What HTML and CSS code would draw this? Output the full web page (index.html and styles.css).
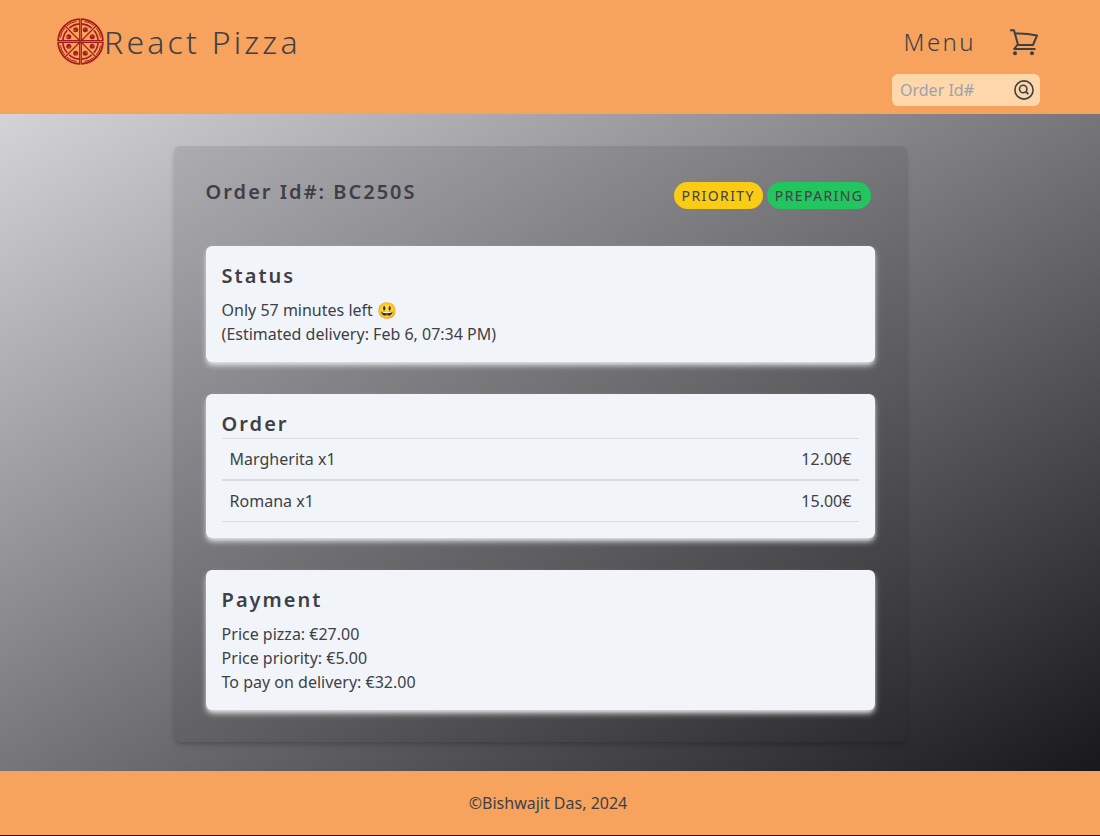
FILE: index.html
```html
<!DOCTYPE html>
<html lang="en">
<head>
<meta charset="utf-8">
<title>React Pizza</title>
<link rel="stylesheet" href="styles.css">
</head>
<body>
<header class="header">
  <div class="topbar">
    <a class="brand">
      <svg class="logo" viewBox="-24.500 -24.500 48 48" fill="none" stroke="#a51c1c">
        <defs>
          <g id="quarter">
            <path stroke-width="1.800" d="M.8 -22.400A22.400 22.400 0 0 1 22.400 -1.300"/>
            <path stroke-width="1.600" d="M1 -17.600Q7 -17.200 11.300 -13.300M13.300 -11.300Q17.200 -7 17.600 -1"/>
            <path stroke-width="1" d="M4 -20.100Q9.500 -19.400 13.500 -15.800M15.800 -13.500Q19.200 -9.500 20.100 -4"/>
            <path stroke-width="1.200" d="M.8 -23V0M23 -.8H0M0 0L15.500 -15.500"/>
            <circle cx="4.800" cy="-11.700" r="2.500" fill="#a51c1c" stroke="none"/>
            <circle cx="11.700" cy="-4.800" r="2.500" fill="#a51c1c" stroke="none"/>
            <path stroke="#f8a35d" stroke-width=".8" d="M3.800 -12.300L4.900 -12.900M10.700 -5.400L11.800 -6"/>
          </g>
        </defs>
        <use href="#quarter"/>
        <use href="#quarter" transform="rotate(90)"/>
        <use href="#quarter" transform="rotate(180)"/>
        <use href="#quarter" transform="rotate(270)"/>
      </svg>
      <span class="brand-name">React Pizza</span>
    </a>
    <nav class="nav">
      <a class="menu">Menu</a>
      <svg class="cart" viewBox="0 0 28 28" fill="none" stroke="currentColor" stroke-width="2" stroke-linejoin="round">
        <path d="M0 2.200H4L8.100 17M5 5.500Q16 5 27 7.500L23 17H7.200L4.200 21H25.500"/>
        <circle cx="5" cy="25.200" r="2" fill="currentColor" stroke="none"/>
        <circle cx="22" cy="25.200" r="2" fill="currentColor" stroke="none"/>
      </svg>
    </nav>
  </div>
  <form class="search">
    <input class="search-input" placeholder="Order Id#">
    <svg class="search-icon" viewBox="0 0 20 20" fill="none" stroke="currentColor" stroke-width="1.600">
      <circle cx="10" cy="10" r="9.100"/>
      <circle cx="9.200" cy="9" r="3.700"/>
      <path stroke-width="1.800" d="M11.900 11.700L14.300 14.100"/>
    </svg>
  </form>
</header>
<main class="main">
  <section class="order">
    <div class="order-head">
      <h2 class="title">Order Id#: BC250S</h2>
      <div class="badges">
        <span class="badge priority">Priority</span>
        <span class="badge preparing">Preparing</span>
      </div>
    </div>
    <div class="card">
      <h2 class="title spaced">Status</h2>
      <p>Only 57 minutes left 😃</p>
      <p>(Estimated delivery: Feb 6, 07:34 PM)</p>
    </div>
    <div class="card">
      <h2 class="title">Order</h2>
      <ul class="items">
        <li class="item"><span>Margherita x1</span><span>12.00€</span></li>
        <li class="item"><span>Romana x1</span><span>15.00€</span></li>
      </ul>
    </div>
    <div class="card">
      <h2 class="title spaced">Payment</h2>
      <p>Price pizza: €27.00</p>
      <p>Price priority: €5.00</p>
      <p>To pay on delivery: €32.00</p>
    </div>
  </section>
</main>
<footer class="footer">©Bishwajit Das, 2024</footer>
</body>
</html>
```
FILE: styles.css
```css
* { box-sizing: border-box; margin: 0; padding: 0; }
body {
  height: 836px;
  display: flex;
  flex-direction: column;
  overflow: hidden;
  background: #18181b;
  color: #3f3f46;
  font: 16px/24px "Noto Sans", sans-serif;
}
.header {
  height: 114px;
  padding: 17px 60px 8px 56px;
  background: #f8a35d;
}
.topbar { display: flex; justify-content: space-between; align-items: center; height: 50px; }
.brand { display: flex; align-items: center; }
.logo { width: 48px; height: 48px; margin-bottom: 2px; }
.brand-name { font-size: 32px; line-height: 40px; font-weight: 300; letter-spacing: 3.200px; }
.nav { display: flex; align-items: center; gap: 34px; }
.menu { font-size: 24px; line-height: 32px; font-weight: 300; letter-spacing: 2.400px; }
.cart { width: 28px; height: 28px; margin-right: 2px; }
.search {
  display: flex;
  align-items: center;
  width: 148px;
  height: 32px;
  margin: 7px 0 0 auto;
  padding: 0 6px 0 8px;
  border-radius: 6px;
  background: #fed7aa;
}
.search-input {
  flex: 1;
  min-width: 0;
  border: 0;
  outline: 0;
  background: transparent;
  font: inherit;
}
.search-input::placeholder { color: #9ca3af; }
.search-icon { width: 20px; height: 20px; }
.main {
  height: 657px;
  padding: 32px 192.600px 29px 173.600px;
  background: linear-gradient(to bottom right, #d4d4d8, #18181b);
}
.order {
  height: 596px;
  padding: 32px;
  display: flex;
  flex-direction: column;
  gap: 32px;
  border-radius: 6px;
  background: rgba(30, 30, 42, .12);
  box-shadow: 0 4px 6px -1px rgba(0, 0, 0, .16), 0 2px 4px -2px rgba(0, 0, 0, .16);
}
.order-head { display: flex; justify-content: space-between; height: 36px; padding-right: 4px; }
.title { font-size: 20px; line-height: 28px; font-weight: 600; letter-spacing: 2px; }
.spaced { margin-bottom: 8px; }
.badges { display: flex; align-items: flex-start; gap: 4px; padding-top: 4px; }
.badge {
  padding: 4px 8px;
  border-radius: 14px;
  font-size: 14px;
  line-height: 19px;
  letter-spacing: 1.400px;
  text-transform: uppercase;
}
.priority { background: #facc15; }
.preparing { background: #22c55e; }
.card {
  padding: 16px;
  border-radius: 6px;
  background: #f1f5f9;
  box-shadow: 0 4px 6px -1px #e4e4e7, 0 2px 4px -2px #e4e4e7;
}
.item {
  display: flex;
  justify-content: space-between;
  height: 42px;
  padding: 8px;
  border-top: 1px solid #d7dade;
  border-bottom: 1px solid #d7dade;
}
.footer {
  height: 64px;
  padding: 20px 4px 20px 0;
  background: #f8a35d;
  text-align: center;
}
```
